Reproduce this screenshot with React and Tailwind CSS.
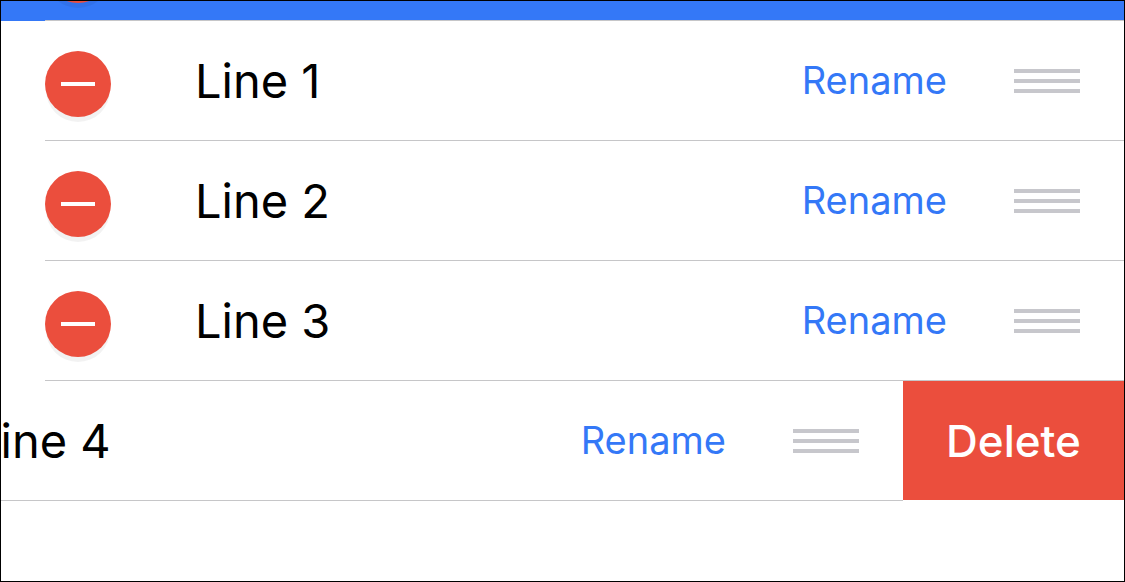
import { useState } from "react";

const RemoveIcon = () => (
  <svg className="block w-[66px] h-21" viewBox="0 0 66 84" fill="none">
    <circle cx="33" cy="51" r="32" fill="#000" fillOpacity="0.05" />
    <circle cx="33" cy="45" r="33" fill="#eb4e3d" />
    <path d="M16 45h34" stroke="#fff" strokeWidth="4" />
  </svg>
);

const HandleIcon = () => (
  <svg className="block w-[66px] h-6" viewBox="0 0 66 24" fill="none" stroke="#c7c7cc" strokeWidth="4">
    <path d="M0 2h66M0 12h66M0 22h66" />
  </svg>
);

const Row = ({ name, onRemove }) => (
  <div className="w-[calc(100%-44px)] h-[120px] shrink-0 flex items-center border-b border-[#c6c6c8] pr-11">
    <button type="button" aria-label={`Remove ${name}`} onClick={onRemove} className="mr-[84px]"><RemoveIcon /></button>
    <span className="flex-1 text-[47px] leading-[57px] text-black whitespace-nowrap">{name}</span>
    <button type="button" className="mr-[67px] text-[38px] leading-[49px] text-[#3478f7]">Rename</button>
    <button type="button" aria-label={`Reorder ${name}`}><HandleIcon /></button>
  </div>
);

export default function App() {
  const [lines, setLines] = useState(["Line 1", "Line 2", "Line 3", "Line 4"]);
  const [swiped, setSwiped] = useState("Line 4");

  const handleDelete = (name) => {
    setLines(lines.filter((line) => line !== name));
    setSwiped(null);
  };

  return (
    <main className="w-full min-h-screen bg-white border border-black overflow-hidden font-['Inter',sans-serif]">
      <div className="h-5 bg-[#3478f7] pl-11 overflow-hidden">
        <div className="h-full flex items-end border-b border-[#c6c6c8] pb-[11px]"><RemoveIcon /></div>
      </div>
      <ul>
        {lines.map((name) => (
          <li key={name} className="flex justify-end overflow-hidden">
            <Row name={name} onRemove={() => setSwiped(name)} />
            {swiped === name && (
              <button type="button" onClick={() => handleDelete(name)} className="w-[221px] shrink-0 mb-px bg-[#eb4e3d] text-white text-[44px] leading-[52px] font-medium">
                Delete
              </button>
            )}
          </li>
        ))}
      </ul>
    </main>
  );
}
